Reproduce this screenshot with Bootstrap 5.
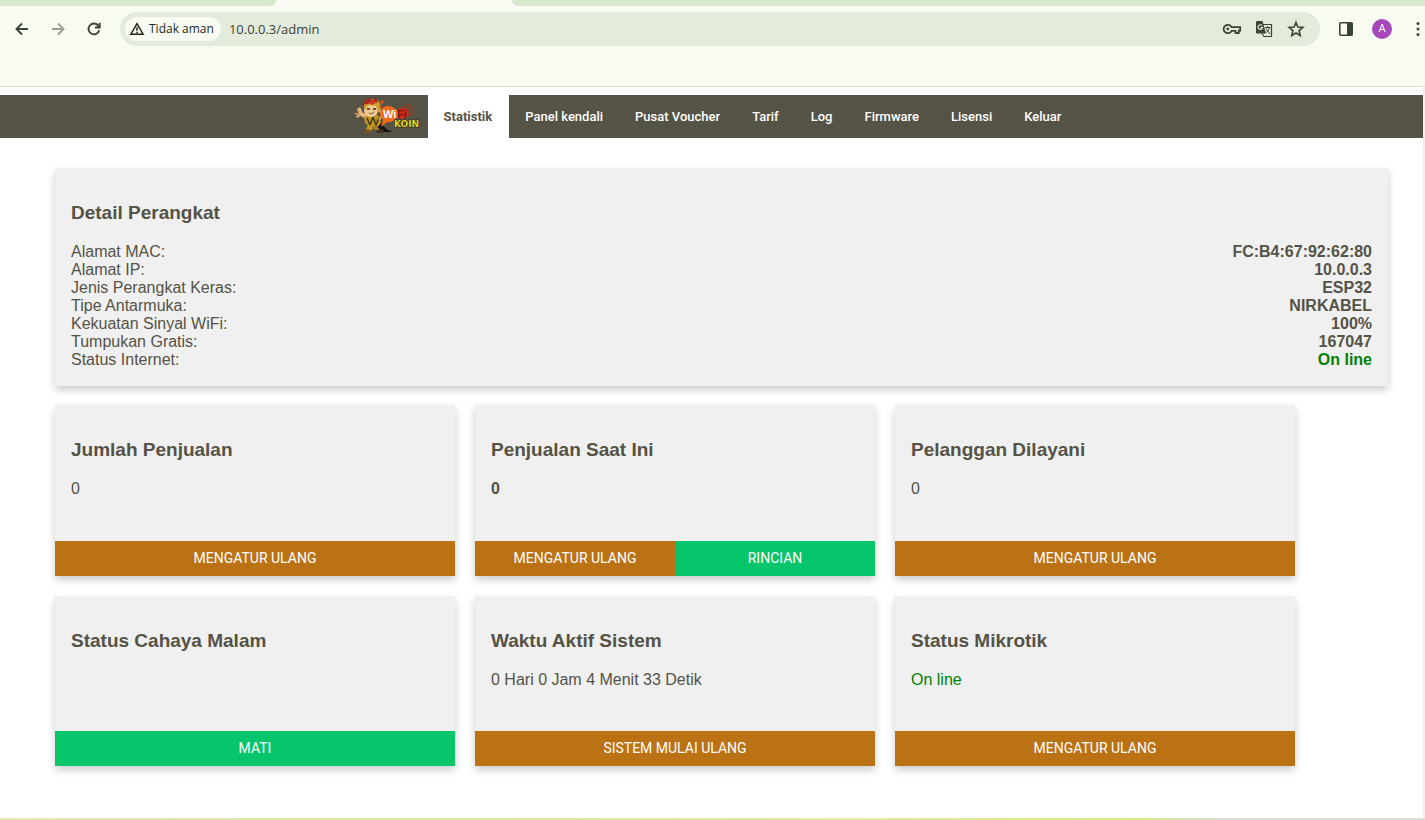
<!DOCTYPE html>
<html lang="id">
<head>
<meta charset="utf-8">
<meta name="viewport" content="width=device-width, initial-scale=1">
<title>WiFi Koin</title>
<link href="https://cdn.jsdelivr.net/npm/bootstrap@5.3.0/dist/css/bootstrap.min.css" rel="stylesheet">
<style>
body{font:16px/18px "Liberation Sans",Arial,sans-serif;color:#555246;background:#fff}
.chrome{background:#f8fbf1;border-bottom:1px solid #e0e2d5;font-family:"Open Sans",sans-serif;color:#3b4437;height:87px}
.tabstrip{height:6px;background:#f8fbf1}
.tab-left{width:276px;background:#d8e8cb;border-bottom-right-radius:8px}
.tab-right{margin-left:236px;background:#d8e8cb;border-bottom-left-radius:8px}
.toolbar{padding:6px 0 0 12px}
.tool{width:20px;height:20px;color:inherit}
.tool-edge{width:17px}
.tool svg,.mark-icon{display:block}
.omnibox{height:34px;background:#e3ebdc;border-radius:17px;padding:0 14px 0 5px;margin-left:16px}
.chip{height:24px;border-radius:12px;background:#f8fbf1;font-size:12px;line-height:24px;color:#22271f;padding:0 7px 0 4px;gap:4px}
.url{font-size:13px;line-height:20px;color:#3a3f36;outline:0}
.avatar{width:20px;height:20px;background:#a846bb;color:#fff;font:400 11px/20px Roboto,sans-serif}
.page{border-right:2px solid #f0f0f0;padding-top:8px}
.mainnav{background:#555246;font:500 13px/43px Roboto,sans-serif}
.mainnav a{color:#fff;text-decoration:none;padding:0 16px;height:43px}
.mainnav a.logo{padding:0 0 0 8px;width:82px}
.mainnav a.active{background:#fff;color:#555246;font-weight:700;padding:0 17px 0 16px}
.content{padding:30px 35px 50px 55px}
.panel-box{background:#f0f0f0;box-shadow:0 4px 8px 0 rgba(0,0,0,.2)}
.panel-body{padding:34px 16px 17px}
h2{font-size:19px;line-height:22px;font-weight:700;margin:0 0 19px}
.details dt{font-weight:400}
.ok{color:#008000}
.tiles{display:grid;grid-template-columns:repeat(3,minmax(0,400px));gap:20px;margin-top:19px}
.tile-body{height:136px}
.tile-body.low{height:135px}
.act{flex:1 1 0;height:35px;border:0;color:#fff;font:400 14px/35px Roboto,sans-serif;padding:0;background:#bb7214}
.act.go{background:#07c56b}
.bottomline{height:2px;background:linear-gradient(90deg,#ece5b4,#dde8a2 30%,#ece8a8 60%,#d9ea8a 80%,#deded6 86%)}
</style>
</head>
<body class="min-vh-100 d-flex flex-column">
<header class="chrome">
  <div class="tabstrip d-flex"><div class="tab-left"></div><div class="tab-right flex-grow-1"></div></div>
  <div class="toolbar d-flex align-items-center">
    <button class="tool btn p-0 border-0" aria-label="Kembali"><svg width="20" height="20" fill="none" stroke="currentColor" stroke-width="1.9"><path d="M16 10H5M10 4.500L4.500 10l5.500 5.500"/></svg></button>
    <button class="tool btn p-0 border-0 ms-3 opacity-50" aria-label="Maju"><svg width="20" height="20" fill="none" stroke="currentColor" stroke-width="1.900"><path d="M4 10h11M10 4.500l5.500 5.500-5.500 5.500"/></svg></button>
    <button class="tool btn p-0 border-0 ms-3" aria-label="Muat ulang"><svg width="20" height="20" fill="none" stroke="currentColor" stroke-width="1.900"><path d="M15.200 11.200A5.400 5.400 0 1 1 14.200 6.600L15.500 8M15.700 3.800V8.500H11"/></svg></button>
    <form class="omnibox flex-grow-1 d-flex align-items-center">
      <button type="button" class="chip border-0 d-flex align-items-center"><svg class="mark-icon" width="16" height="16" fill="none" stroke="currentColor" stroke-width="1.500"><path d="M8 2.700L1.900 13.200h12.200ZM8 6.300v3.500M8 10.700v1.500"/></svg>Tidak aman</button>
      <input class="url border-0 bg-transparent p-0 ms-2 flex-grow-1" aria-label="Alamat" value="10.0.0.3/admin">
      <div class="d-flex gap-2">
        <button type="button" class="tool btn p-0 border-0" aria-label="Kata sandi"><svg width="20" height="20" fill="none" stroke="currentColor" stroke-width="1.800"><path d="M9.600 8.200H18.200V11.700H16.800V14H13.500V11.800H9.600A4.200 4.200 0 1 1 9.600 8.200Z"/><circle cx="5.800" cy="10" r="1.400" fill="currentColor" stroke="none"/></svg></button>
        <button type="button" class="tool btn p-0 border-0 mx-1" aria-label="Terjemahkan"><svg width="20" height="20" fill="none" stroke="currentColor"><path d="M9 5.500h8.500v12H10l-2-3" stroke-width="1.200"/><path d="M3 2h5.500l3.500 12.500H3a1 1 0 0 1-1-1V3a1 1 0 0 1 1-1Z" fill="currentColor" stroke="none"/><path d="M8.200 6.700A2.300 2.300 0 1 0 8.600 8.500H6.500" stroke="#e3ebdc" stroke-width="1.200"/><path d="M11 8.500h5.500M13.500 7v1.500M15.400 8.500C15 11 13.500 12.500 12.200 13.300M12 9.500l4 5.500"/></svg></button>
        <button type="button" class="tool btn p-0 border-0" aria-label="Markah"><svg width="20" height="20" fill="none" stroke="currentColor" stroke-width="1.700"><path d="M10 3.500l1.900 4.500 4.900.4-3.700 3.200 1.100 4.800-4.200-2.500-4.200 2.500 1.100-4.800-3.700-3.200 4.900-.4Z"/></svg></button>
      </div>
    </form>
    <button class="tool btn p-0 border-0 ms-3" aria-label="Panel samping"><svg width="20" height="20"><rect x="3.800" y="3.800" width="12.400" height="12.400" rx="1" fill="none" stroke="currentColor" stroke-width="1.600"/><path d="M11 3.500h5.500v13H11Z" fill="currentColor"/></svg></button>
    <button class="avatar border-0 p-0 rounded-circle ms-3">A</button>
    <button class="tool tool-edge btn p-0 border-0 ms-3 overflow-hidden" aria-label="Menu"><svg width="20" height="20" fill="currentColor"><circle cx="10" cy="4.500" r="1.500"/><circle cx="10" cy="10" r="1.500"/><circle cx="10" cy="15.500" r="1.500"/></svg></button>
  </div>
</header>
<div class="page flex-grow-1">
  <nav class="mainnav d-flex flex-wrap justify-content-center" aria-label="Utama">
    <a class="logo" href="#" aria-label="WiFi Koin"><svg class="d-block" width="74" height="43" viewBox="0 0 74 43">
      <path d="M18 26q8 12 16 10l-8-9Z" fill="#1c1710"/><path d="M26 29q5 7 13 7-9 3-14-3Z" fill="#111"/>
      <path d="M3 14l2 6 5 3 5-1 1-3-7-1-3-6Z" fill="#e3b77d"/><path d="M1 18l4 3M2 22l4-1M5 14v6" stroke="#dbac70" stroke-width="1.500"/>
      <path d="M10 22l6-3 8 1 3 7-2 4-9 1-5-4Z" fill="#c2951f"/><path d="M13 23l3 7 3-8 3 8 3-7" stroke="#463517" stroke-width="1.500" fill="none"/>
      <path d="M14 30l-3 6h7l1-5Z" fill="#c49a28"/><path d="M22 30l5 6-2 2-6-5Z" fill="#ac8027"/><path d="M11 34l-1 4h8v-3Z" fill="#76591f"/><path d="M22 35l7-1 1 4h-7Z" fill="#403020"/>
      <circle cx="17" cy="15" r="7" fill="#efcb94"/><path d="M10 12q0-9 8-8 8-1 9 9l-3 5-2-7-7-1-4 5Z" fill="#d3a02d"/><path d="M8 10l3-5 4-2 3 2 4-2 2 5-5-2-5 3Z" fill="#a8261f"/><path d="M14 8l5-3 3 3-4 2Z" fill="#cf3b27"/>
      <path d="M13 14h3M19 14h3" stroke="#45291a" stroke-width="1.500"/><path d="M15 18q3 2 5-1" stroke="#954924" fill="none"/><path d="M25 14l3 6-3 5" stroke="#d5a668" stroke-width="2" fill="none"/>
      <circle cx="28" cy="7" r="1.800" fill="#e8551a"/><circle cx="26" cy="12" r="1" fill="#e8551a"/>
      <path d="M26 18q1-7 8-7 5 0 8 4 6-3 10 0 3 4-1 8H42q-3 5-9 4l-6 5 2-7q-3-3-3-7Z" fill="#ef6b18"/>
      <path d="M43 14q11-3 12 4 0 6-10 6Z" fill="#c92e1c"/><path d="M48 12q5-2 7 4l1 5M51 9q7 0 7 7v5" stroke="#913f24" stroke-width="1.500" fill="none"/>
      <text x="29" y="23" font-family="Liberation Sans,sans-serif" font-weight="700" font-size="11" fill="#fff">Wi</text><text x="43" y="23" font-family="Liberation Sans,sans-serif" font-weight="700" font-size="11" fill="#791512">Fi</text>
      <text x="40" y="32" font-family="DejaVu Sans,sans-serif" font-weight="700" font-size="9" fill="#d9d51e" stroke="#292915" stroke-width="1" paint-order="stroke">KOIN</text>
    </svg></a>
    <a class="active" href="#" aria-current="page">Statistik</a><a href="#">Panel kendali</a><a href="#">Pusat Voucher</a><a href="#">Tarif</a><a href="#">Log</a><a href="#">Firmware</a><a href="#">Lisensi</a><a href="#">Keluar</a>
  </nav>
  <main class="content">
    <section class="panel-box panel-body">
      <h2>Detail Perangkat</h2>
      <dl class="details mb-0">
        <div class="d-flex justify-content-between"><dt>Alamat MAC:</dt><dd class="fw-bold mb-0">FC:B4:67:92:62:80</dd></div>
        <div class="d-flex justify-content-between"><dt>Alamat IP:</dt><dd class="fw-bold mb-0">10.0.0.3</dd></div>
        <div class="d-flex justify-content-between"><dt>Jenis Perangkat Keras:</dt><dd class="fw-bold mb-0">ESP32</dd></div>
        <div class="d-flex justify-content-between"><dt>Tipe Antarmuka:</dt><dd class="fw-bold mb-0">NIRKABEL</dd></div>
        <div class="d-flex justify-content-between"><dt>Kekuatan Sinyal WiFi:</dt><dd class="fw-bold mb-0">100%</dd></div>
        <div class="d-flex justify-content-between"><dt>Tumpukan Gratis:</dt><dd class="fw-bold mb-0">167047</dd></div>
        <div class="d-flex justify-content-between"><dt>Status Internet:</dt><dd class="fw-bold mb-0 ok">On line</dd></div>
      </dl>
    </section>
    <div class="tiles">
      <section class="panel-box"><div class="panel-body tile-body"><h2>Jumlah Penjualan</h2><p class="m-0">0</p></div><div class="d-flex"><button class="act">MENGATUR ULANG</button></div></section>
      <section class="panel-box"><div class="panel-body tile-body"><h2>Penjualan Saat Ini</h2><p class="m-0 fw-bold">0</p></div><div class="d-flex"><button class="act">MENGATUR ULANG</button><button class="act go">RINCIAN</button></div></section>
      <section class="panel-box"><div class="panel-body tile-body"><h2>Pelanggan Dilayani</h2><p class="m-0">0</p></div><div class="d-flex"><button class="act">MENGATUR ULANG</button></div></section>
      <section class="panel-box"><div class="panel-body tile-body low"><h2>Status Cahaya Malam</h2></div><div class="d-flex"><button class="act go">MATI</button></div></section>
      <section class="panel-box"><div class="panel-body tile-body low"><h2>Waktu Aktif Sistem</h2><p class="m-0">0 Hari 0 Jam 4 Menit 33 Detik</p></div><div class="d-flex"><button class="act">SISTEM MULAI ULANG</button></div></section>
      <section class="panel-box"><div class="panel-body tile-body low"><h2>Status Mikrotik</h2><p class="m-0 ok">On line</p></div><div class="d-flex"><button class="act">MENGATUR ULANG</button></div></section>
    </div>
  </main>
</div>
<div class="bottomline"></div>
<script src="https://cdn.jsdelivr.net/npm/bootstrap@5.3.0/dist/js/bootstrap.bundle.min.js"></script>
</body>
</html>
